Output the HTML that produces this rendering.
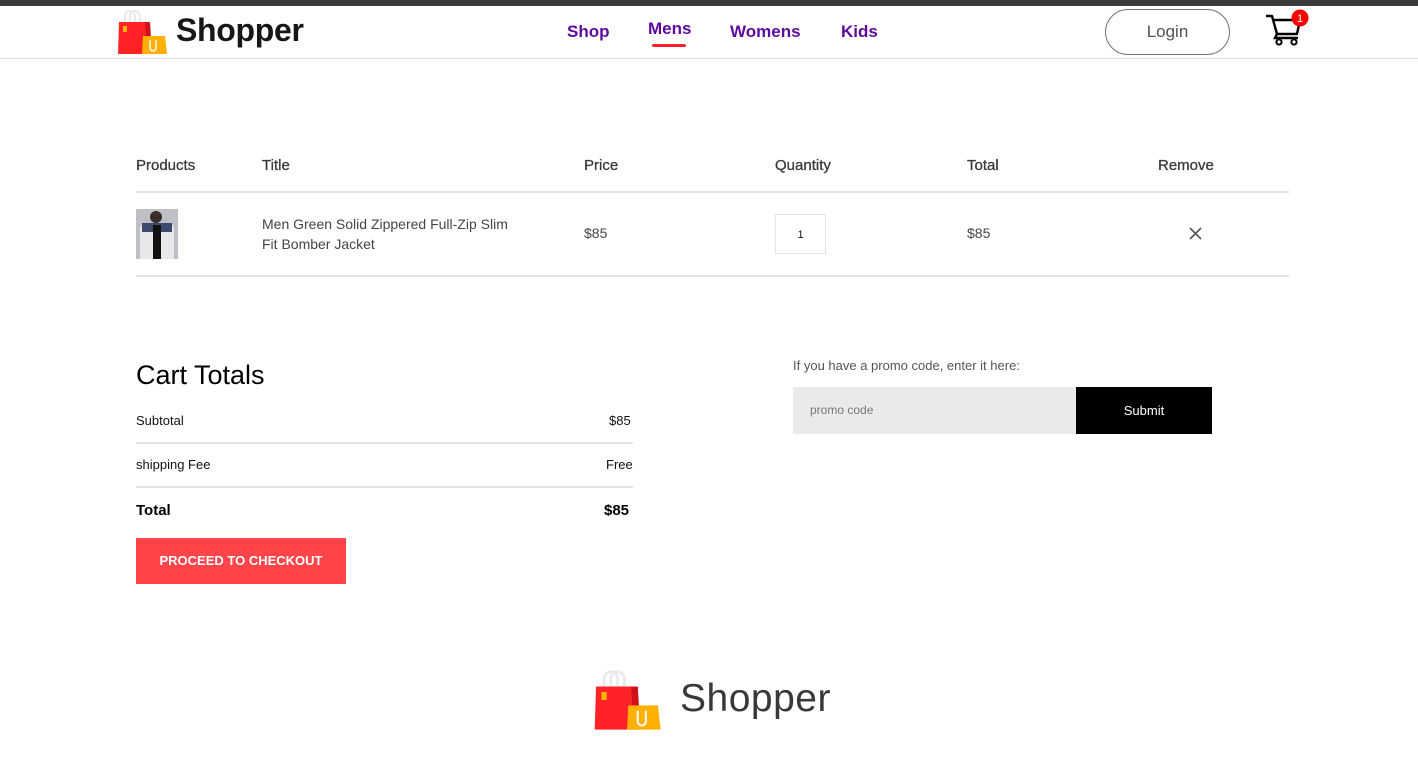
<!DOCTYPE html>
<html><head><meta charset="utf-8"><style>
*{margin:0;padding:0;box-sizing:border-box}
body{width:1418px;height:784px;overflow:hidden;background:#fff;font-family:"Liberation Sans",sans-serif;position:relative}
.a{position:absolute;white-space:nowrap}
.nav{color:#5e0a9c;font-size:17px;font-weight:bold;top:22px}
.th{top:157px;font-size:15px;color:#3a3a3a;-webkit-text-stroke:0.3px #3a3a3a}
.td{font-size:14px;color:#454545}
.line{position:absolute;height:2px;background:#e2e2e2}
.ct{font-size:13px;color:#111}
</style></head><body>
<div class="a" style="left:0;top:0;width:1418px;height:6px;background:#3b3b3b"></div>
<div class="a" style="left:0;top:58px;width:1418px;height:1px;background:#ddd"></div>

<svg class="a" style="left:116px;top:8px" width="52" height="48" viewBox="0 0 52 48">
<path d="M9 16 V8 a5 5 0 0 1 10 0 V16 M14 16 V8 a5 5 0 0 1 10 0 V16" fill="none" stroke="#e6e9ee" stroke-width="2"/>
<path d="M3 14 H34 L35 46 H2 Z" fill="#ff2328"/>
<path d="M29 14 H34 L35 30 H30 Z" fill="#d0101a"/>
<rect x="7" y="18" width="4" height="6" fill="#ffb000"/>
<path d="M27 28 H49 L51 46 H26 Z" fill="#ffb000"/>
<path d="M34 32 V40 a3 3 0 0 0 6 0 V32" fill="none" stroke="#f4f4f4" stroke-width="1.6"/>
</svg>
<div class="a" style="left:176px;top:12px;font-size:32px;font-weight:bold;color:#171717;letter-spacing:-0.3px">Shopper</div>

<div class="a nav" style="left:567px">Shop</div>
<div class="a nav" style="left:648px;top:19px">Mens</div>
<div class="a" style="left:652px;top:44px;width:34px;height:3px;background:#ff1f2a;border-radius:2px"></div>
<div class="a nav" style="left:730px">Womens</div>
<div class="a nav" style="left:841px">Kids</div>

<div class="a" style="left:1105px;top:9px;width:125px;height:46px;border:1px solid #777;border-radius:23px;text-align:center;line-height:44px;font-size:17px;color:#515151">Login</div>

<svg class="a" style="left:1262px;top:6px" width="52" height="42" viewBox="0 0 52 42">
<path d="M4 10 H10 L15 28 H35 L38 14 H11" fill="none" stroke="#000" stroke-width="2.4" stroke-linejoin="round"/>
<path d="M15 28 L13 32 H36" fill="none" stroke="#000" stroke-width="2.4"/>
<circle cx="17" cy="36" r="2.6" fill="none" stroke="#000" stroke-width="2"/>
<circle cx="32" cy="36" r="2.6" fill="none" stroke="#000" stroke-width="2"/>
<circle cx="38" cy="12" r="8.5" fill="#ff0000"/>
<text x="38" y="16" text-anchor="middle" font-size="11" fill="#fff" font-family="Liberation Sans">1</text>
</svg>

<div class="a th" style="left:136px">Products</div>
<div class="a th" style="left:262px">Title</div>
<div class="a th" style="left:584px">Price</div>
<div class="a th" style="left:775px">Quantity</div>
<div class="a th" style="left:967px">Total</div>
<div class="a th" style="left:1158px">Remove</div>
<div class="line" style="left:136px;top:191px;width:1153px"></div>

<div class="a" style="left:136px;top:209px;width:42px;height:50px;background:#bfc0c6;overflow:hidden">
<div class="a" style="left:14px;top:2px;width:12px;height:12px;border-radius:50%;background:#3a2e2a"></div>
<div class="a" style="left:4px;top:14px;width:34px;height:40px;background:#e8e8ea;border-radius:6px 6px 0 0"></div>
<div class="a" style="left:6px;top:14px;width:30px;height:9px;background:#3d4a6e"></div>
<div class="a" style="left:17px;top:16px;width:8px;height:40px;background:#111"></div>
</div>
<div class="a td" style="left:262px;top:214px;line-height:20px;white-space:normal;width:262px">Men Green Solid Zippered Full-Zip Slim Fit Bomber Jacket</div>
<div class="a td" style="left:584px;top:225px">$85</div>
<div class="a" style="left:775px;top:214px;width:51px;height:40px;border:1px solid #e4e4e4;text-align:center;line-height:40px;font-size:11px;color:#111">1</div>
<div class="a td" style="left:967px;top:225px">$85</div>
<svg class="a" style="left:1189px;top:227px" width="13" height="13" viewBox="0 0 13 13"><path d="M1 1 L12 12 M12 1 L1 12" stroke="#555" stroke-width="1.6"/></svg>
<div class="line" style="left:136px;top:275px;width:1153px"></div>

<div class="a" style="left:136px;top:360px;font-size:27px;color:#000">Cart Totals</div>
<div class="a ct" style="left:136px;top:413px">Subtotal</div>
<div class="a ct" style="left:609px;top:413px">$85</div>
<div class="line" style="left:136px;top:442px;width:497px"></div>
<div class="a ct" style="left:136px;top:457px">shipping Fee</div>
<div class="a ct" style="left:606px;top:457px">Free</div>
<div class="line" style="left:136px;top:486px;width:497px"></div>
<div class="a" style="left:136px;top:502px;font-size:15px;font-weight:bold">Total</div>
<div class="a" style="left:604px;top:502px;font-size:15px;font-weight:bold">$85</div>
<div class="a" style="left:136px;top:538px;width:210px;height:46px;background:#ff4549;color:#fff;font-weight:bold;font-size:13px;text-align:center;line-height:46px">PROCEED TO CHECKOUT</div>

<div class="a" style="left:793px;top:358px;font-size:13px;color:#555">If you have a promo code, enter it here:</div>
<div class="a" style="left:793px;top:387px;width:283px;height:47px;background:#eaeaea;font-size:12px;color:#777;line-height:47px;padding-left:17px">promo code</div>
<div class="a" style="left:1076px;top:387px;width:136px;height:47px;background:#000;color:#fff;font-size:13px;text-align:center;line-height:47px">Submit</div>

<svg class="a" style="left:592px;top:666px" width="70" height="68" viewBox="0 0 52 48">
<path d="M9 16 V8 a5 5 0 0 1 10 0 V16 M14 16 V8 a5 5 0 0 1 10 0 V16" fill="none" stroke="#e6e9ee" stroke-width="2"/>
<path d="M3 14 H34 L35 46 H2 Z" fill="#ff2328"/>
<path d="M29 14 H34 L35 30 H30 Z" fill="#d0101a"/>
<rect x="7" y="18" width="4" height="6" fill="#ffb000"/>
<path d="M27 28 H49 L51 46 H26 Z" fill="#ffb000"/>
<path d="M34 32 V40 a3 3 0 0 0 6 0 V32" fill="none" stroke="#f4f4f4" stroke-width="1.6"/>
</svg>
<div class="a" style="left:680px;top:677px;font-size:39px;color:#383838;letter-spacing:0.5px">Shopper</div>
</body></html>
